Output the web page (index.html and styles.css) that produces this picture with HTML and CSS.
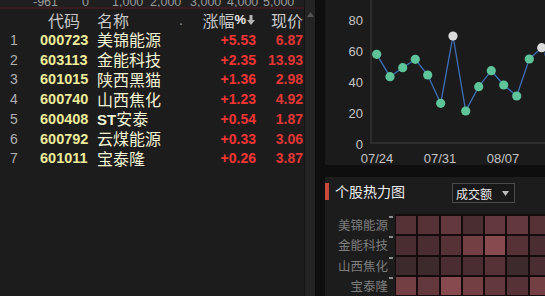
FILE: index.html
```html
<!DOCTYPE html>
<html lang="zh-CN">
<head>
  <meta charset="UTF-8">
  <meta name="viewport" content="width=device-width, initial-scale=1.0">
  <title>个股热力图</title>
  <link rel="stylesheet" href="styles.css">
</head>
<body>
  <div class="left">
    <div class="list">
      <div class="axis-strip">
        <span>-961</span><span>0</span><span>1,000</span><span>2,000</span><span>3,000</span><span>4,000</span><span>5,000</span>
      </div>
      <div class="axis-line"></div>
      <div class="row head">
        <span></span>
        <span class="h-code">代码</span>
        <span class="h-name">名称</span>
        <span class="h-dot">.</span>
        <span class="h-chg">涨幅<b>%</b><svg width="8" height="10" viewBox="0 0 8 10"><polygon points="2.5,0 5.5,0 5.5,5 8,5 4,10 0,5 2.5,5" fill="#b4b4b4"/></svg></span>
        <span class="h-price">现价</span>
      </div>
      <div class="row"><span class="idx">1</span><span class="code">000723</span><span class="name">美锦能源</span><span></span><span class="chg">+5.53</span><span class="price">6.87</span></div>
      <div class="row"><span class="idx">2</span><span class="code">603113</span><span class="name">金能科技</span><span></span><span class="chg">+2.35</span><span class="price">13.93</span></div>
      <div class="row"><span class="idx">3</span><span class="code">601015</span><span class="name">陕西黑猫</span><span></span><span class="chg">+1.36</span><span class="price">2.98</span></div>
      <div class="row"><span class="idx">4</span><span class="code">600740</span><span class="name">山西焦化</span><span></span><span class="chg">+1.23</span><span class="price">4.92</span></div>
      <div class="row"><span class="idx">5</span><span class="code">600408</span><span class="name"><b>ST</b>安泰</span><span></span><span class="chg">+0.54</span><span class="price">1.87</span></div>
      <div class="row"><span class="idx">6</span><span class="code">600792</span><span class="name">云煤能源</span><span></span><span class="chg">+0.33</span><span class="price">3.06</span></div>
      <div class="row"><span class="idx">7</span><span class="code">601011</span><span class="name">宝泰隆</span><span></span><span class="chg">+0.26</span><span class="price">3.87</span></div>
    </div>
    <div class="scrollbar">
      <svg width="7" height="5" viewBox="0 0 7 5"><polygon points="3.5,0 7,5 0,5" fill="#555"/></svg>
    </div>
  </div>

  <div class="right">
    <div class="chart">
      <svg width="220" height="165" viewBox="0 0 220 165">
        <g class="ylab" text-anchor="end">
          <text x="38" y="24.6">80</text>
          <text x="38" y="55.6">60</text>
          <text x="38" y="86.6">40</text>
          <text x="38" y="117.6">20</text>
          <text x="38" y="148.6">0</text>
        </g>
        <path d="M46 0 V143 H220" fill="none" stroke="#343434" stroke-width="1.5"/>
        <g class="xlab" text-anchor="middle">
          <text x="52" y="162.5">07/24</text>
          <text x="115" y="162.5">07/31</text>
          <text x="178" y="162.5">08/07</text>
        </g>
        <polyline fill="none" stroke="#3f6fb8" stroke-width="1.3"
          points="51.7,54.3 65,76.7 77.7,67.7 90.3,59.3 102.7,75 115.7,103.3 128,36 140.7,111 153.7,86.7 166.3,70.7 178.7,85 191.7,96 204.3,59 216.7,47.7 224,54"/>
        <g fill="#5ec59a">
          <circle cx="51.7" cy="54.3" r="4.6"/>
          <circle cx="65" cy="76.7" r="4.6"/>
          <circle cx="77.7" cy="67.7" r="4.6"/>
          <circle cx="90.3" cy="59.3" r="4.6"/>
          <circle cx="102.7" cy="75" r="4.6"/>
          <circle cx="115.7" cy="103.3" r="4.6"/>
          <circle cx="140.7" cy="111" r="4.6"/>
          <circle cx="153.7" cy="86.7" r="4.6"/>
          <circle cx="166.3" cy="70.7" r="4.6"/>
          <circle cx="178.7" cy="85" r="4.6"/>
          <circle cx="191.7" cy="96" r="4.6"/>
          <circle cx="204.3" cy="59" r="4.6"/>
        </g>
        <g fill="#dcdcdc">
          <circle cx="128" cy="36" r="4.6"/>
          <circle cx="216.7" cy="47.7" r="4.6"/>
        </g>
        <circle cx="224" cy="54" r="4.6" fill="#3f6fb8"/>
      </svg>
    </div>

    <div class="heat">
      <div class="heat-head">
        <span class="bar"></span>
        <span class="heat-title">个股热力图</span>
        <span class="dropdown">成交额<svg width="7" height="5" viewBox="0 0 7 5"><polygon points="0,0 7,0 3.5,5" fill="#bbb"/></svg></span>
      </div>
      <div class="heat-body">
        <div class="labels">
          <div class="lab"><span>美锦能源</span><i></i></div>
          <div class="lab"><span>金能科技</span><i></i></div>
          <div class="lab"><span>山西焦化</span><i></i></div>
          <div class="lab"><span>宝泰隆</span><i></i></div>
        </div>
        <div class="cells">
          <span class="l3"></span><span class="l3"></span><span class="l4"></span><span class="l2"></span><span class="l4"></span><span class="l4"></span><span class="l3"></span>
          <span class="l2"></span><span class="l2"></span><span class="l3"></span><span class="l5"></span><span class="l6"></span><span class="l3"></span><span class="l2"></span>
          <span class="l1"></span><span class="l1"></span><span class="l2"></span><span class="l2"></span><span class="l3"></span><span class="l1"></span><span class="l2"></span>
          <span class="l5"></span><span class="l4"></span><span class="l6"></span><span class="l5"></span><span class="l4"></span><span class="l3"></span><span class="l5"></span>
        </div>
      </div>
    </div>
  </div>
</body>
</html>
```

FILE: styles.css
```css
* {
  box-sizing: border-box;
}
body {
  margin: 0;
  width: 545px;
  height: 296px;
  overflow: hidden;
  background: #0e0e0e;
  display: flex;
  font-family: "Liberation Sans", Arial, "Noto Sans CJK SC", sans-serif;
}

/* left list */
.left {
  width: 315px;
  height: 296px;
  margin-right: 10px;
  display: flex;
  background: #1c1c1c;
}
.list {
  width: 304px;
}
.axis-strip {
  height: 7px;
  overflow: hidden;
  background: #1f1f1f;
  display: grid;
  grid-template-columns: 49px 30px 38px 40px 37px 36px 1fr;
  padding-left: 33px;
  font-size: 12.5px;
  line-height: 14px;
  color: #9a9a9a;
}
.axis-strip span {
  margin-top: -5px;
}
.axis-line {
  height: 2px;
  background: #3a1c23;
}
.row {
  display: grid;
  grid-template-columns: 40px 57px 73px 30px 57px 47px;
  height: 19.75px;
  align-items: center;
  white-space: nowrap;
}
.row.head {
  height: 21px;
  font-family: "Noto Sans CJK SC", sans-serif;
  font-size: 16px;
  line-height: 20px;
  color: #c8c8c8;
}
.h-code {
  padding-left: 8px;
}
.h-dot {
  padding-left: 9px;
  font-family: "Liberation Sans", sans-serif;
  font-size: 14px;
  color: #999;
}
.h-chg {
  display: flex;
  align-items: center;
  justify-content: flex-end;
  padding-right: 2px;
}
.h-chg b {
  font-family: "Liberation Sans", sans-serif;
  font-size: 13px;
  color: #eee;
  margin-right: 1px;
}
.h-price {
  text-align: right;
  padding-right: 1px;
}
.idx {
  padding-left: 10px;
  font-size: 14px;
  color: #b0b0b0;
}
.code {
  font-size: 14.5px;
  font-weight: bold;
  color: #ecec9a;
}
.name {
  font-family: "Noto Sans CJK SC", sans-serif;
  font-size: 16px;
  line-height: 19px;
  color: #f2f2d4;
}
.name b {
  font-family: "Liberation Sans", sans-serif;
  font-size: 15px;
}
.chg {
  text-align: right;
  padding-right: 1px;
  font-size: 14px;
  font-weight: bold;
  color: #f53434;
}
.price {
  text-align: right;
  padding-right: 1px;
  font-size: 14px;
  font-weight: bold;
  color: #e23636;
}
.scrollbar {
  width: 11px;
  border-left: 1px solid #121212;
  background: #232323;
  padding: 12px 0 0 2px;
}
.scrollbar svg {
  display: block;
}

/* right side */
.right {
  width: 220px;
  display: flex;
  flex-direction: column;
  gap: 12px;
  overflow: hidden;
}
.chart {
  height: 165px;
  background: #1b1b1b;
}
.chart svg {
  display: block;
}
.ylab text,
.xlab text {
  font-family: "Liberation Sans", sans-serif;
  font-size: 13px;
  fill: #c4c4c4;
}
.heat {
  flex: 1;
  background: #1c1c1c;
  padding-top: 6px;
  overflow: hidden;
}
.heat-head {
  display: flex;
  align-items: flex-start;
  height: 20px;
}
.heat-head .bar {
  width: 4px;
  height: 17px;
  background: #c8483a;
}
.heat-title {
  margin-left: 6px;
  font-family: "Noto Sans CJK SC", sans-serif;
  font-size: 14px;
  line-height: 17px;
  color: #eee;
}
.dropdown {
  margin-left: 47px;
  width: 63px;
  height: 20px;
  border: 1px solid #4a4a4a;
  background: #181818;
  display: flex;
  align-items: center;
  gap: 10px;
  padding-left: 3px;
  font-family: "Noto Sans CJK SC", sans-serif;
  font-size: 12px;
  color: #e8e8e8;
}
.heat-body {
  display: flex;
  margin-top: 11px;
}
.labels {
  width: 70px;
  flex-shrink: 0;
  padding-top: 1px;
}
.lab {
  height: 20.3px;
  display: flex;
  justify-content: flex-end;
  padding-right: 2px;
}
.lab span {
  font-family: "Noto Sans CJK SC", sans-serif;
  font-size: 12.5px;
  line-height: 20.3px;
  color: #7e7e7e;
  margin-right: 1px;
}
.lab i {
  width: 4px;
  height: 2px;
  margin-top: 1px;
  background: #8e8e8e;
}
.cells {
  display: grid;
  grid-template-columns: repeat(7, 20.3px);
  grid-auto-rows: 18.3px;
  gap: 2px;
  padding: 2px 0 0 1px;
  background: #150b0c;
}
.l1 { background: #3d2a2d; }
.l2 { background: #4a2d31; }
.l3 { background: #563237; }
.l4 { background: #62383c; }
.l5 { background: #733f43; }
.l6 { background: #874a4e; }
```
